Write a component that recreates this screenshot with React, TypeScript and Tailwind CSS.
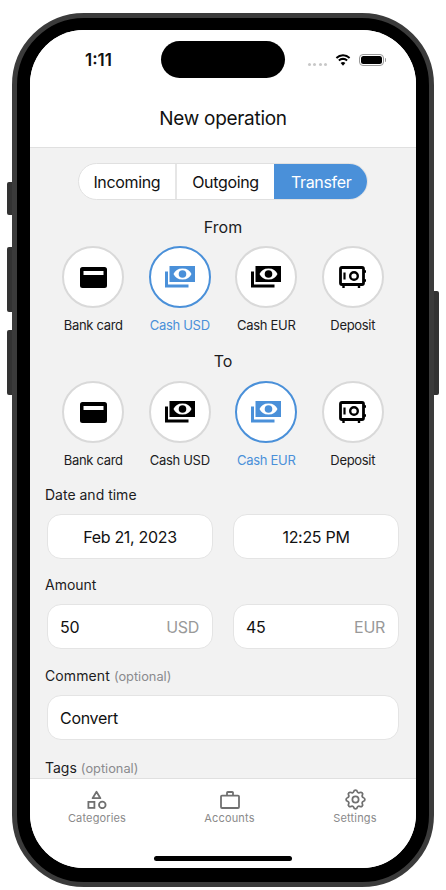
import type { ReactNode } from 'react';
import { TbSettings } from 'react-icons/tb';

const CardIcon = () => (
  <svg width="27" height="21" viewBox="0 0 27 21" fill="currentColor">
    <path
      fillRule="evenodd"
      d="M2.5 0h22A2.5 2.5 0 0 1 27 2.5v16a2.5 2.5 0 0 1-2.5 2.5h-22A2.5 2.5 0 0 1 0 18.5v-16A2.5 2.5 0 0 1 2.5 0ZM3.5 4v4h20V4Z"
    />
  </svg>
);

const CashIcon = () => (
  <svg width="30" height="22" viewBox="0 0 30 22" fill="currentColor">
    <path
      fillRule="evenodd"
      d="M4.5 0H30v16H4.500ZM8.500 8c1.500 3.500 4.500 5.500 9 5.500s7.500-2 9-5.500c-1.500-3.500-4.500-5.500-9-5.500S10 4.500 8.500 8Z"
    />
    <circle cx="17.5" cy="8" r="3.8" />
    <path d="M0 5.500h3v13h20.500v3H0Z" />
  </svg>
);

const SafeIcon = () => (
  <svg width="27" height="22" viewBox="0 0 27 22" fill="none" stroke="currentColor">
    <rect x="1.5" y="1.5" width="23" height="17" rx="1.5" strokeWidth="2.8" />
    <path d="M5.500 6.500v7" strokeWidth="2.2" />
    <circle cx="15" cy="10" r="3.8" strokeWidth="2.4" />
    <path d="M24 5.500h3M24 14.500h3M4.500 19.500v2.500M20 19.500v2.500" strokeWidth="2.4" />
  </svg>
);

const ShapesIcon = () => (
  <svg width="20" height="19" viewBox="0 0 20 19" fill="none" stroke="currentColor" strokeWidth="1.8">
    <path d="M9.500 1.800 13.400 8.200H5.600Z" strokeLinejoin="round" />
    <rect x="1.400" y="11.900" width="6" height="6" />
    <circle cx="15.300" cy="14.900" r="3.300" />
  </svg>
);

const BriefcaseIcon = () => (
  <svg width="20" height="18" viewBox="0 0 20 18" fill="none" stroke="currentColor" strokeWidth="1.8">
    <rect x="1" y="4.600" width="18" height="12.400" rx="1" />
    <path d="M7 4.600V1.800a.8.8 0 0 1 .8-.8h4.400a.8.8 0 0 1 .8.8v2.800" />
  </svg>
);

const WifiIcon = () => (
  <svg width="16" height="12" viewBox="0 0 17 12" fill="currentColor" preserveAspectRatio="none">
    <path d="M8.500 2.300c2.400 0 4.600.9 6.300 2.500l1.400-1.500A11 11 0 0 0 8.500.2 11 11 0 0 0 .8 3.300l1.400 1.500a9.100 9.100 0 0 1 6.300-2.500Z" />
    <path d="M8.500 5.900c1.400 0 2.700.5 3.700 1.400l1.400-1.500a7.400 7.400 0 0 0-10.200 0l1.400 1.500c1-.9 2.300-1.400 3.700-1.400Z" />
    <path d="M8.500 11.800 11 9.100a3.600 3.600 0 0 0-5 0Z" />
  </svg>
);

const Option = ({
  label,
  icon,
  active,
}: {
  label: string;
  icon: ReactNode;
  active?: boolean;
}) => (
  <div className="flex w-[86.5px] flex-col items-center">
    <div
      className={
        active
          ? 'flex size-[62px] items-center justify-center rounded-full border-2 border-[#4a90d9] bg-white text-[#4a90d9]'
          : 'flex size-[62px] items-center justify-center rounded-full border-2 border-[#d9d9d9] bg-white text-black'
      }
    >
      {icon}
    </div>
    <p
      className={
        active
          ? 'mt-[8px] text-[13px] leading-[18px] tracking-[-0.3px] text-[#4a90d9]'
          : 'mt-[8px] text-[13px] leading-[18px] tracking-[-0.3px] text-[#1c1c1e]'
      }
    >
      {label}
    </p>
  </div>
);

const OptionRow = ({ active, className }: { active: 'usd' | 'eur'; className: string }) => (
  <div className={`flex justify-center ${className}`}>
    <Option label="Bank card" icon={<CardIcon />} />
    <Option label="Cash USD" icon={<CashIcon />} active={active === 'usd'} />
    <Option label="Cash EUR" icon={<CashIcon />} active={active === 'eur'} />
    <Option label="Deposit" icon={<SafeIcon />} />
  </div>
);

const FieldLabel = ({
  label,
  hint,
  className,
}: {
  label: string;
  hint?: string;
  className: string;
}) => (
  <p className={`text-[14px] leading-5 text-[#1c1c1e] ${className}`}>
    {label}
    {hint ? (
      <span className="ml-[4px] text-[12.8px] tracking-normal text-[#8a8a8e]">{hint}</span>
    ) : null}
  </p>
);

const Field = ({ children, className }: { children: ReactNode; className: string }) => (
  <div
    className={`flex h-[45px] items-center rounded-[14px] border border-[#e4e4e4] bg-white text-[16px] tracking-[-0.3px] text-[#111] ${className}`}
  >
    {children}
  </div>
);

const Tab = ({
  label,
  icon,
  className,
}: {
  label: string;
  icon: ReactNode;
  className?: string;
}) => (
  <div className={`flex w-[100px] flex-col items-center text-[#707070] ${className ?? ''}`}>
    <div className="flex h-[19px] items-center">{icon}</div>
    <p className="mt-[2px] text-[11px] leading-[14px] tracking-[0.15px] text-[#8a8a8a]">{label}</p>
  </div>
);

export default function App() {
  return (
    <div className="h-[890px] w-[446px] overflow-hidden bg-white pl-3 pt-[13px] font-['Inter',sans-serif]">
      <div className="relative h-[874px] w-[422px] rounded-[72px] border-[5px] border-[#3b3b3b] bg-black px-[13px] pt-[12px]">
        <div className="absolute -left-[10px] top-[164px] h-[33px] w-[5px] rounded-l-[2px] bg-[#333]" />
        <div className="absolute -left-[10px] top-[229px] h-[65px] w-[5px] rounded-l-[2px] bg-[#333]" />
        <div className="absolute -left-[10px] top-[312px] h-[65px] w-[5px] rounded-l-[2px] bg-[#333]" />
        <div className="absolute -right-[10px] top-[273px] h-[104px] w-[5px] rounded-r-[2px] bg-[#333]" />

        <div className="relative flex h-[838px] w-[386px] flex-col overflow-hidden rounded-[54px] bg-white">
          <div className="absolute left-[131px] top-[11px] h-[37px] w-[124px] rounded-full bg-black" />

          <header className="h-[118px] border-b border-[#e0e0e0] bg-white">
            <div className="flex h-[60px] items-center justify-between pl-[55px] pr-[32px]">
              <span className="text-[17px] font-semibold leading-none text-[#111]">1:11</span>
              <div className="flex items-center">
                <div className="mr-[8px] mt-2 flex gap-[2.3px]">
                  <span className="size-[3px] rounded-full bg-[#c8c8c8]" />
                  <span className="size-[3px] rounded-full bg-[#c8c8c8]" />
                  <span className="size-[3px] rounded-full bg-[#c8c8c8]" />
                  <span className="size-[3px] rounded-full bg-[#c8c8c8]" />
                </div>
                <WifiIcon />
                <div className="relative ml-[8px] flex h-[12px] w-[25px] items-center rounded-[4px] border border-[#999] p-[1px]">
                  <div className="h-full w-full rounded-[2.5px] bg-black" />
                  <div className="absolute -right-[3px] h-[4px] w-[1.5px] rounded-r-[1px] bg-[#999]" />
                </div>
              </div>
            </div>
            <h1 className="mt-[15px] text-center text-[19px] leading-7 tracking-[-0.3px] text-[#111]">
              New operation
            </h1>
          </header>

          <main className="h-[630px] overflow-hidden bg-[#f2f2f2] px-[15px] pt-[15px]">
            <div className="mx-auto flex h-[37px] w-[290px] overflow-hidden rounded-[19px] border border-[#e0e0e0] bg-white text-[16px] tracking-[-0.35px] text-[#111]">
              <div className="flex w-[98px] items-center justify-center border-r-2 border-[#e6e6e6]">
                Incoming
              </div>
              <div className="flex w-[98px] items-center justify-center">Outgoing</div>
              <div className="-my-px -mr-px flex w-[94px] items-center justify-center bg-[#4a90d9] text-white">
                Transfer
              </div>
            </div>

            <p className="mt-[17px] text-center text-[16px] leading-5 text-[#1c1c1e]">From</p>
            <OptionRow active="usd" className="mt-[9px]" />
            <p className="mt-[17px] text-center text-[16px] leading-5 text-[#1c1c1e]">To</p>
            <OptionRow active="eur" className="mt-[10px]" />

            <FieldLabel label="Date and time" className="mt-4" />
            <div className="mx-[2px] mt-[9px] flex gap-5">
              <Field className="w-[166px] justify-center">Feb 21, 2023</Field>
              <Field className="w-[166px] justify-center">12:25 PM</Field>
            </div>

            <FieldLabel label="Amount" className="mt-4" />
            <div className="mx-[2px] mt-[9px] flex gap-5">
              <Field className="w-[166px] justify-between pl-[12px] pr-[13px]">
                <span>50</span>
                <span className="text-[#999]">USD</span>
              </Field>
              <Field className="w-[166px] justify-between pl-[12px] pr-[13px]">
                <span>45</span>
                <span className="text-[#999]">EUR</span>
              </Field>
            </div>

            <FieldLabel label="Comment" hint="(optional)" className="mt-[17px] tracking-[0.1px]" />
            <div className="mx-[2px] mt-[8px]">
              <Field className="w-[352px] px-[12px]">Convert</Field>
            </div>

            <FieldLabel label="Tags" hint="(optional)" className="mt-[18px]" />
          </main>

          <nav className="relative flex-1 border-t border-[#e0e0e0] bg-white">
            <div className="flex pl-[17px] pt-[11px]">
              <Tab label="Categories" icon={<ShapesIcon />} />
              <Tab label="Accounts" icon={<BriefcaseIcon />} className="ml-[32.5px]" />
              <Tab
                label="Settings"
                icon={<TbSettings size={25} strokeWidth={1.7} />}
                className="ml-[25.5px]"
              />
            </div>
            <div className="absolute bottom-[7px] left-[124px] h-[5px] w-[138px] rounded-full bg-black" />
          </nav>
        </div>
      </div>
    </div>
  );
}
